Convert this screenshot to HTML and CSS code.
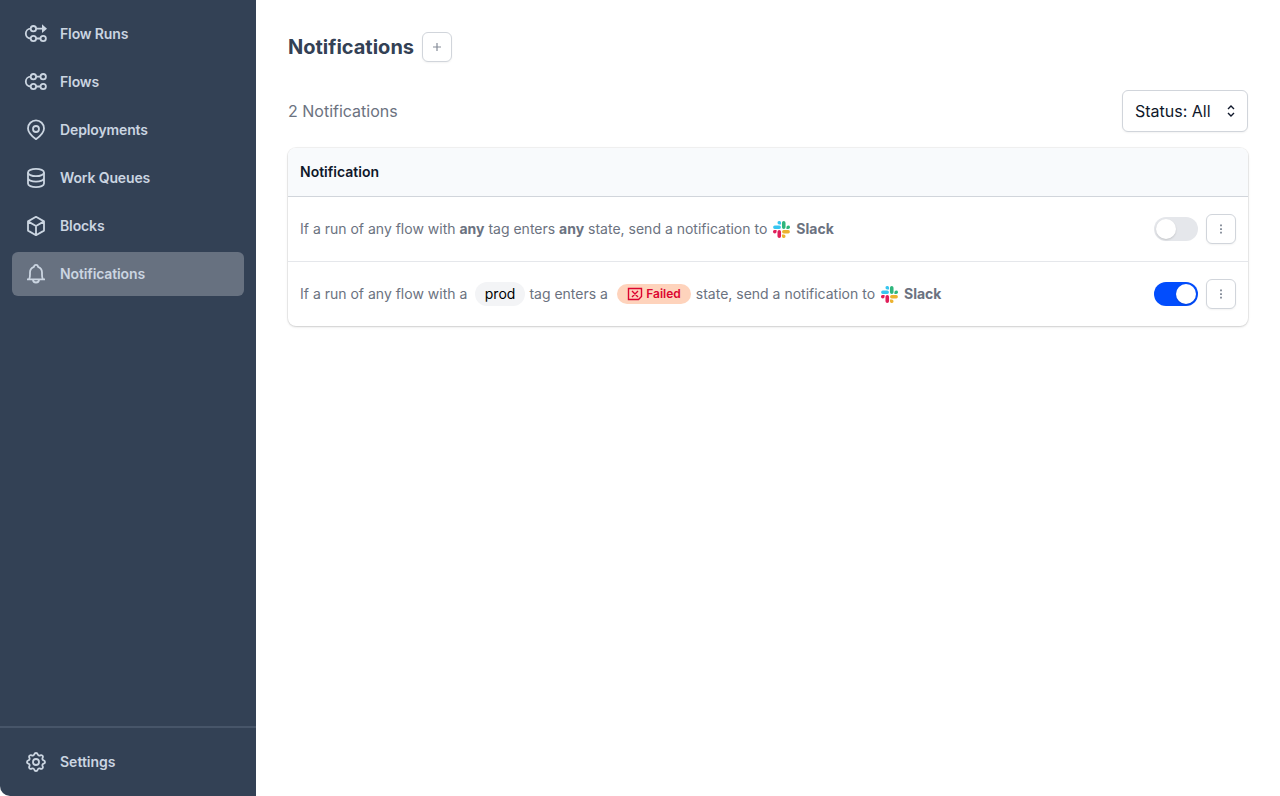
FILE: index.html
```html
<!DOCTYPE html>
<html lang="en">
<head>
<meta charset="utf-8">
<title>Notifications</title>
<link rel="stylesheet" href="styles.css">
</head>
<body>
<svg class="defs" aria-hidden="true">
  <symbol id="slack" viewBox="0 0 24 24">
    <path fill="#E01E5A" d="M5.04 15.17a2.53 2.53 0 1 1-2.52-2.53h2.52zM6.31 15.17a2.53 2.53 0 0 1 5.05 0v6.31a2.53 2.53 0 0 1-5.05 0z"/>
    <path fill="#36C5F0" d="M8.83 5.04a2.53 2.53 0 1 1 2.53-2.52v2.52zM8.83 6.31a2.53 2.53 0 0 1 0 5.05H2.52a2.53 2.53 0 0 1 0-5.05z"/>
    <path fill="#2EB67D" d="M18.96 8.83a2.53 2.53 0 1 1 2.52 2.53h-2.52zM17.69 8.83a2.53 2.53 0 0 1-5.05 0V2.52a2.53 2.53 0 0 1 5.05 0z"/>
    <path fill="#ECB22E" d="M15.17 18.96a2.53 2.53 0 1 1-2.53 2.52v-2.52zM15.17 17.69a2.53 2.53 0 0 1 0-5.05h6.31a2.53 2.53 0 0 1 0 5.05z"/>
  </symbol>
  <symbol id="dots" viewBox="0 0 16 16"><path d="M7 3.5h2v1.7H7zM7 7.2h2v1.7H7zM7 10.8h2v1.7H7z"/></symbol>
</svg>
<div class="app">
  <aside class="sidebar">
    <nav class="nav">
      <a class="nav-item"><svg class="icon" viewBox="0 0 24 24"><circle cx="9.4" cy="6.7" r="2.7"/><circle cx="9.4" cy="16.5" r="2.7"/><circle cx="19.2" cy="16.5" r="2.7"/><path d="M12.1 6.7h7M12.1 16.5h4.4M6.7 6.7a4.9 4.9 0 0 0 0 9.8"/><path class="solid" d="M18 2.3l5 4.4-5 4.4z"/></svg>Flow Runs</a>
      <a class="nav-item"><svg class="icon" viewBox="0 0 24 24"><circle cx="9.4" cy="6.7" r="2.7"/><circle cx="19.2" cy="6.7" r="2.7"/><circle cx="9.4" cy="16.5" r="2.7"/><circle cx="19.2" cy="16.5" r="2.7"/><path d="M12.1 6.7h4.4M12.1 16.5h4.4M6.7 6.7a4.9 4.9 0 0 0 0 9.8"/></svg>Flows</a>
      <a class="nav-item"><svg class="icon" viewBox="0 0 24 24"><path d="M12 21.2c-2.2-1.7-8-6-8-10.8a8 8 0 0 1 16 0c0 4.8-5.8 9.1-8 10.8z"/><circle cx="12" cy="11" r="3"/></svg>Deployments</a>
      <a class="nav-item"><svg class="icon" viewBox="0 0 24 24"><ellipse cx="12" cy="6.5" rx="8" ry="3.7"/><path d="M4 6.5v11c0 2.1 3.6 3.7 8 3.7s8-1.6 8-3.7v-11M4 12c0 2.1 3.6 3.7 8 3.7s8-1.6 8-3.7"/></svg>Work Queues</a>
      <a class="nav-item"><svg class="icon" viewBox="0 0 24 24"><path d="M12 2.8l8 4.6v9.2l-8 4.6-8-4.6V7.4zM4 7.4l8 4.6 8-4.6M12 12v9.2"/></svg>Blocks</a>
      <a class="nav-item nav-item--active"><svg class="icon" viewBox="0 0 24 24"><path d="M3 17.3h18M5.2 17c.7-1.200.8-2.500.8-4.500V10.500a6 6 0 0 1 4-5.700 2 2 0 0 1 4 0 6 6 0 0 1 4 5.700v2c0 2 .1 3.300.8 4.500M9 17.500a3 3 0 0 0 6 0"/></svg>Notifications</a>
    </nav>
    <div class="sidebar-footer">
      <a class="nav-item"><svg class="icon" viewBox="0 0 24 24"><path d="M10.325 4.317c.426-1.756 2.924-1.756 3.350 0a1.724 1.724 0 0 0 2.573 1.066c1.543-.94 3.310.826 2.370 2.370a1.724 1.724 0 0 0 1.065 2.572c1.756.426 1.756 2.924 0 3.350a1.724 1.724 0 0 0-1.066 2.573c.94 1.543-.826 3.310-2.370 2.370a1.724 1.724 0 0 0-2.572 1.065c-.426 1.756-2.924 1.756-3.350 0a1.724 1.724 0 0 0-2.573-1.066c-1.543.94-3.310-.826-2.370-2.370a1.724 1.724 0 0 0-1.065-2.572c-1.756-.426-1.756-2.924 0-3.350a1.724 1.724 0 0 0 1.066-2.573c-.94-1.543.826-3.310 2.370-2.370.996.608 2.296.07 2.572-1.065z"/><circle cx="12" cy="12" r="3"/></svg><span class="wide">Settings</span></a>
    </div>
  </aside>
  <main class="main">
    <header class="heading">
      <h1 class="title">Notifications</h1>
      <button class="icon-button"><svg class="plus" viewBox="0 0 16 16"><path d="M8 4v8M4 8h8"/></svg></button>
    </header>
    <div class="toolbar">
      <span class="count">2 Notifications</span>
      <button class="select">Status: All<svg class="chevrons" viewBox="0 0 10 14"><path d="M2 5l3-3 3 3M2 9l3 3 3-3"/></svg></button>
    </div>
    <section class="table">
      <div class="table-head">Notification</div>
      <div class="row">
        <div class="sentence"><span>If a run of any flow with <b>any</b> tag enters <b>any</b> state, send a notification to</span><svg class="slack"><use href="#slack"/></svg><b>Slack</b></div>
        <div class="actions"><span class="toggle"><span class="knob"></span></span><button class="icon-button"><svg class="dots"><use href="#dots"/></svg></button></div>
      </div>
      <div class="row">
        <div class="sentence"><span>If a run of any flow with a</span><span class="tag">prod</span><span>tag enters a</span><span class="state"><svg class="state-icon" viewBox="0 0 16 16"><path d="M1.5 2.5h13v8l-3 3h-10zM5 5l6 6M11 5l-6 6"/></svg>Failed</span><span>state, send a notification to</span><svg class="slack"><use href="#slack"/></svg><b>Slack</b></div>
        <div class="actions"><span class="toggle toggle--on"><span class="knob"></span></span><button class="icon-button"><svg class="dots"><use href="#dots"/></svg></button></div>
      </div>
    </section>
  </main>
</div>
</body>
</html>
```
FILE: styles.css
```css
* { box-sizing: border-box; }
body { margin: 0; background: #fff; font-family: Inter, sans-serif; color: #0f172a; }
button { font: inherit; color: inherit; background: #fff; margin: 0; }
.defs { display: none; }
.app { display: flex; height: 796px; }
.sidebar { width: 256px; display: flex; flex-direction: column; justify-content: space-between; background: #334155; border-bottom-left-radius: 10px; }
.nav { display: flex; flex-direction: column; gap: 4px; padding: 12px; }
.sidebar-footer { padding: 12px; border-top: 2px solid #475569; }
.nav-item { display: flex; align-items: center; gap: 12px; height: 44px; padding: 0 12px; border-radius: 6px; font-size: 14px; line-height: 20px; font-weight: 600; letter-spacing: -0.13px; color: #cbd5e1; }
.nav-item--active { background: #677180; }
.wide { letter-spacing: 0; }
.icon { width: 24px; height: 24px; fill: none; stroke: currentColor; stroke-width: 1.8; stroke-linejoin: round; }
.solid { fill: currentColor; stroke: none; }
.main { flex: 1; padding: 32px; }
.heading { display: flex; align-items: center; gap: 8px; height: 30px; }
.title { margin: 0; font-size: 20px; line-height: 28px; font-weight: 700; color: #334155; }
.icon-button { display: flex; align-items: center; justify-content: center; width: 30px; height: 30px; padding: 0; border: 1px solid #d1d5db; border-radius: 6px; box-shadow: 0 1px 2px rgba(0,0,0,.05); }
.plus { width: 16px; height: 16px; fill: none; stroke: #858c98; stroke-width: 1.2; }
.dots { width: 16px; height: 16px; fill: #8b929e; }
.toolbar { display: flex; align-items: center; justify-content: space-between; height: 42px; margin: 28px 0 16px; }
.count { font-size: 16px; color: #6b7280; }
.select { display: flex; align-items: center; justify-content: space-between; width: 126px; height: 42px; padding: 0 11px 0 12px; border: 1px solid #d1d5db; border-radius: 6px; font-size: 16px; box-shadow: 0 1px 2px rgba(0,0,0,.05); }
.chevrons { width: 10px; height: 14px; fill: none; stroke: #0f172a; stroke-width: 1.4; }
.table { border-radius: 8px; overflow: hidden; box-shadow: 0 0 0 1px rgba(0,0,0,.05), 0 1px 3px rgba(0,0,0,.1), 0 1px 2px rgba(0,0,0,.06); }
.table-head { height: 49px; padding: 0 12px; line-height: 48px; border-bottom: 1px solid #d1d5db; background: #f8fafc; font-size: 14px; font-weight: 600; }
.row { display: flex; align-items: center; justify-content: space-between; height: 65px; padding: 0 12px; border-bottom: 1px solid #e5e7eb; }
.row:last-child { height: 64px; border-bottom: 0; }
.sentence { display: flex; align-items: center; font-size: 14px; line-height: 20px; color: #6b7280; }
.sentence b { font-weight: 700; }
.slack { width: 17px; height: 17px; margin: 0 6px; }
.tag { height: 24px; margin: 0 4.5px 0 8px; padding: 0 9.5px; line-height: 24px; border-radius: 12px; background: #f3f4f6; color: #000; }
.state { display: flex; align-items: center; gap: 3px; height: 20px; margin: 0 5px 0 9.3px; padding: 0 10px; border-radius: 10px; background: #fed3bc; color: #dc0530; font-size: 12px; line-height: 16px; font-weight: 600; }
.state-icon { width: 16px; height: 16px; fill: none; stroke: currentColor; stroke-width: 1.4; }
.actions { display: flex; align-items: center; gap: 8px; }
.toggle { display: flex; width: 44px; height: 24px; padding: 2px; border-radius: 12px; background: #e5e7eb; }
.toggle--on { justify-content: flex-end; background: #024dfd; }
.knob { width: 20px; height: 20px; border-radius: 50%; background: #fff; box-shadow: 0 1px 2px rgba(0,0,0,.15); }
```
